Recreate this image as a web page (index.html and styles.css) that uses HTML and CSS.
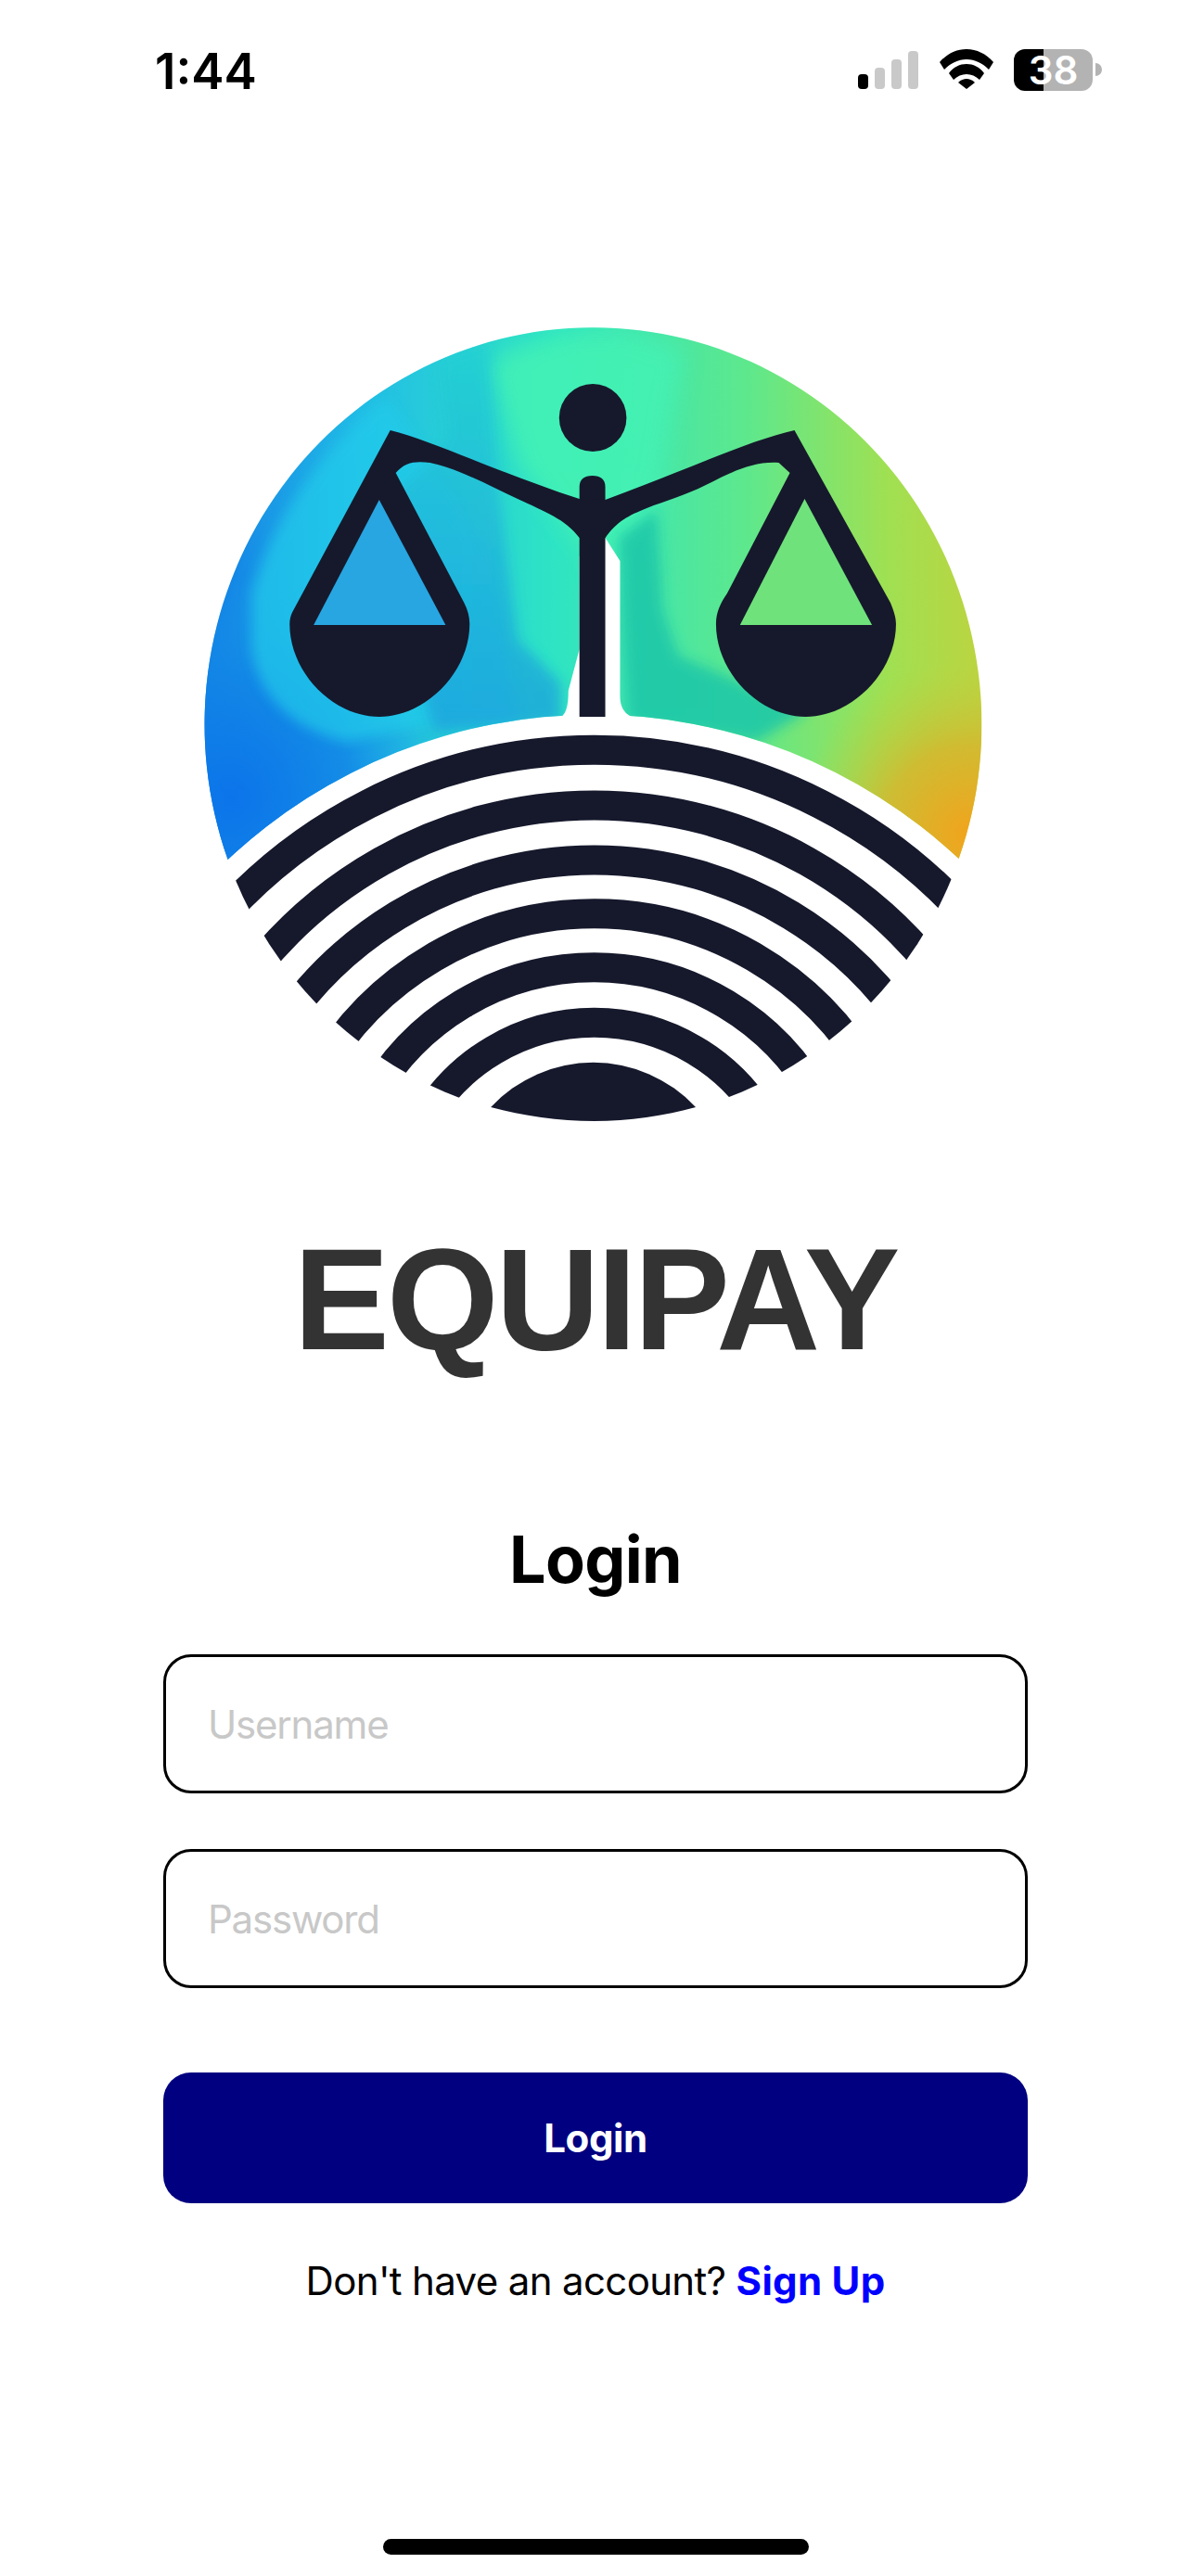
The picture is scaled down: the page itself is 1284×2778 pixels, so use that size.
FILE: index.html
```html
<!DOCTYPE html>
<html lang="en">
<head>
<meta charset="utf-8">
<title>EquiPay Login</title>
<link rel="stylesheet" href="styles.css">
</head>
<body>
<div class="screen">
  <header class="status">
    <span class="time">1:44</span>
    <div class="status-icons">
      <div class="signal">
        <i class="bar bar-1"></i><i class="bar bar-2"></i><i class="bar bar-3"></i><i class="bar bar-4"></i>
      </div>
      <svg class="wifi" viewBox="0 0 58 43" width="58" height="43">
        <path d="M0 14C8 5 18 0 29 0C40 0 50 5 58 14L53 22C46 15 38 11 29 11C20 11 12 15 5 22Z"/>
        <path d="M10 26C15 19 22 16 29 16C36 16 43 19 48 26L43 33C39 29 34 27 29 27C24 27 19 29 15 33Z"/>
        <path d="M20 36C23 33 26 32 29 32C32 32 35 33 38 36L29 43Z"/>
      </svg>
      <div class="battery"><span class="battery-level">38</span></div>
      <div class="battery-nub"></div>
    </div>
  </header>

  <svg class="logo" viewBox="208.2 345 872 870" width="867.6" height="870" preserveAspectRatio="none" role="img" aria-label="EquiPay logo">
    <defs>
      <linearGradient id="base" x1="221" y1="0" x2="1063" y2="0" gradientUnits="userSpaceOnUse">
        <stop offset="0" stop-color="#0f78e6"/>
        <stop offset="0.08" stop-color="#1a98e6"/>
        <stop offset="0.2" stop-color="#22bde6"/>
        <stop offset="0.45" stop-color="#2ee4c4"/>
        <stop offset="0.7" stop-color="#5ee88c"/>
        <stop offset="0.88" stop-color="#a0e052"/>
        <stop offset="1" stop-color="#bcd440"/>
      </linearGradient>
      <linearGradient id="wedge" x1="0" y1="370" x2="0" y2="780" gradientUnits="userSpaceOnUse">
        <stop offset="0" stop-color="#22d0d2"/>
        <stop offset="0.45" stop-color="#20b8da"/>
        <stop offset="1" stop-color="#1ea0dc"/>
      </linearGradient>
      <radialGradient id="orange" cx="1050" cy="900" r="190" gradientUnits="userSpaceOnUse">
        <stop offset="0" stop-color="#f2a31c"/>
        <stop offset="0.5" stop-color="#d8b42c" stop-opacity="0.8"/>
        <stop offset="1" stop-color="#b8d040" stop-opacity="0"/>
      </radialGradient>
      <radialGradient id="blue" cx="250" cy="860" r="240" gradientUnits="userSpaceOnUse">
        <stop offset="0" stop-color="#0b74ea"/>
        <stop offset="0.55" stop-color="#1286e6" stop-opacity="0.85"/>
        <stop offset="1" stop-color="#1a9ee6" stop-opacity="0"/>
      </radialGradient>
      <filter id="soft" x="-30%" y="-30%" width="160%" height="160%"><feGaussianBlur stdDeviation="12"/></filter>
      <filter id="mid" x="-30%" y="-30%" width="160%" height="160%"><feGaussianBlur stdDeviation="7"/></filter>
      <clipPath id="dome">
        <path d="M246 927A421 428 0 1 1 1038 926A581 581 0 0 0 246 927Z"/>
      </clipPath>
      <clipPath id="disc">
        <ellipse cx="642" cy="782" rx="421" ry="428"/>
      </clipPath>
    </defs>

    <g clip-path="url(#dome)">
      <rect x="215" y="350" width="860" height="600" fill="url(#base)"/>
      <rect x="215" y="560" width="360" height="400" fill="url(#blue)"/>
      <path d="M272 640C295 560 350 480 420 430L530 600L560 780L470 780L375 800C330 790 280 760 272 700Z" fill="#24cbea" opacity="0.7" filter="url(#mid)"/>
      <path d="M530 390C600 350 690 350 740 380L700 600L665 660L640 600L560 500Z" fill="#44f2b4" opacity="0.85" filter="url(#soft)"/>
      <path d="M475 390L526 370L537 507L560 690L607 737L607 780L470 790C450 720 420 650 410 560C430 520 470 500 485 470Z" fill="url(#wedge)" opacity="0.75" filter="url(#mid)"/>
      <path d="M669 580L711 550L717 657L734 707L874 767L818 800L680 780Z" fill="#1cc6a8" opacity="0.85" filter="url(#mid)"/>
      <rect x="850" y="700" width="220" height="240" fill="url(#orange)"/>
    </g>

    <path d="M606 774C613 770 615 760 615 745L627 700L627 600L655 580L671 605L671 750C671 762 675 770 686 774L660 790L630 790Z" fill="#fff"/>

    <g class="ink">
      <ellipse cx="641.5" cy="450.5" rx="36.5" ry="36.5"/>
      <path d="M627 525C627 517 632 513 641 513C650 513 655 517 655 525L655 773L627 773Z"/>
      <path d="M422 464C470 476 540 510 627 538L655 539C735 510 810 475 860 464L964 650C968 660 970 666 970 673C970 725 922 773 872 773C822 773 775 725 775 673C775 660 780 650 787 640L855 510L843 499C815 497 790 510 764 523C740 535 720 540 700 548C680 556 668 562 655 580L627 580C612 560 590 552 560 538C530 524 495 505 465 499C450 497 438 498 428 510L502 650C506 658 508 665 508 673C508 725 460 773 410 773C360 773 313 725 313 673C313 668 314 664 316 660Z"/>
    </g>
    <path d="M410 539L339 674L482 674Z" fill="#27a6e2"/>
    <path d="M871 538L801 674L944 674Z" fill="#6fe27c"/>

    <g class="bands" clip-path="url(#disc)">
      <path d="M221 1010A543 543 0 0 1 1065 1010"/>
      <path d="M256 1071A471 471 0 0 1 1030 1071"/>
      <path d="M293 1123A411 411 0 0 1 993 1123"/>
      <path d="M343 1160A345 345 0 0 1 943 1160"/>
      <path d="M398 1190A278 278 0 0 1 888 1190"/>
      <path d="M463 1201A214 214 0 0 1 823 1201"/>
    </g>
    <path class="ink" d="M531 1194A152 152 0 0 1 753 1194C720 1203 680 1209 643 1209C605 1209 565 1203 531 1194Z"/>
  </svg>

  <h1 class="brand">EQUIPAY</h1>
  <h2 class="heading">Login</h2>

  <form class="form">
    <div class="field">Username</div>
    <div class="field">Password</div>
    <button class="submit" type="button">Login</button>
  </form>

  <p class="signup">Don't have an account? <a class="signup-link">Sign Up</a></p>
  <div class="home-bar"></div>
</div>
</body>
</html>
```
FILE: styles.css
```css
* { box-sizing: border-box; }
html, body { margin: 0; padding: 0; background: #fff; }
.screen {
  width: 1284px;
  height: 2778px;
  display: flex;
  flex-direction: column;
  align-items: center;
  font-family: Inter, "Liberation Sans", sans-serif;
  overflow: hidden;
}
.status {
  width: 100%;
  height: 110px;
  padding: 48px 96px 0 167px;
  display: flex;
  justify-content: space-between;
  align-items: flex-start;
}
.time {
  font-size: 53px;
  font-weight: 600;
  line-height: 58px;
  color: #000;
}
.status-icons {
  display: flex;
  align-items: flex-start;
  padding-top: 5px;
}
.signal {
  width: 65px;
  height: 41px;
  margin-top: 2px;
  margin-right: 23px;
  display: flex;
  justify-content: space-between;
  align-items: flex-end;
}
.bar { width: 11px; border-radius: 4px; background: #c9c9c9; display: block; }
.bar-1 { height: 16px; background: #000; }
.bar-2 { height: 23px; }
.bar-3 { height: 32px; }
.bar-4 { height: 41px; }
.wifi { display: block; margin-right: 22px; fill: #000; }
.battery {
  width: 85px;
  height: 45px;
  border-radius: 12px;
  background: linear-gradient(90deg, #000 32px, #b3b3b3 32px);
  display: flex;
  align-items: center;
  justify-content: center;
}
.battery-level {
  color: #fff;
  font-size: 42px;
  font-weight: 600;
  line-height: 45px;
}
.battery-nub {
  width: 7px;
  height: 14px;
  margin-top: 15px;
  margin-left: 3px;
  border-radius: 0 7px 7px 0;
  background: #b3b3b3;
}
.logo { display: block; margin-top: 235px; flex: none; }
.ink { fill: #16192c; }
.bands { fill: none; stroke: #16192c; stroke-width: 32px; }
.brand {
  margin: 112px 0 0;
  font-family: "Liberation Sans", Arial, sans-serif;
  font-size: 155px;
  line-height: 150px;
  font-weight: 700;
  letter-spacing: -3px;
  color: #333;
}
.heading {
  margin: 163px 0 0;
  font-size: 70px;
  line-height: 84px;
  font-weight: 700;
  letter-spacing: -0.7px;
  color: #000;
}
.form {
  margin-top: 60px;
  width: 932px;
  display: flex;
  flex-direction: column;
}
.field {
  height: 150px;
  margin-bottom: 60px;
  padding-left: 45px;
  display: flex;
  align-items: center;
  border: 3px solid #000;
  border-radius: 30px;
  font-size: 42px;
  letter-spacing: -1.2px;
  color: #c8c8c8;
}
.field:nth-child(2) { margin-bottom: 91px; }
.submit {
  height: 141px;
  border: 0;
  border-radius: 30px;
  background: #000080;
  color: #fff;
  font-family: inherit;
  font-size: 42px;
  font-weight: 700;
  letter-spacing: -0.4px;
}
.signup {
  margin: 59px 0 0;
  font-size: 42px;
  line-height: 50px;
  letter-spacing: -0.65px;
  color: #000;
}
.signup-link { color: #00f; font-weight: 700; letter-spacing: 0.3px; }
.home-bar {
  margin-top: 253px;
  width: 459px;
  height: 17px;
  border-radius: 9px;
  background: #000;
}
```
